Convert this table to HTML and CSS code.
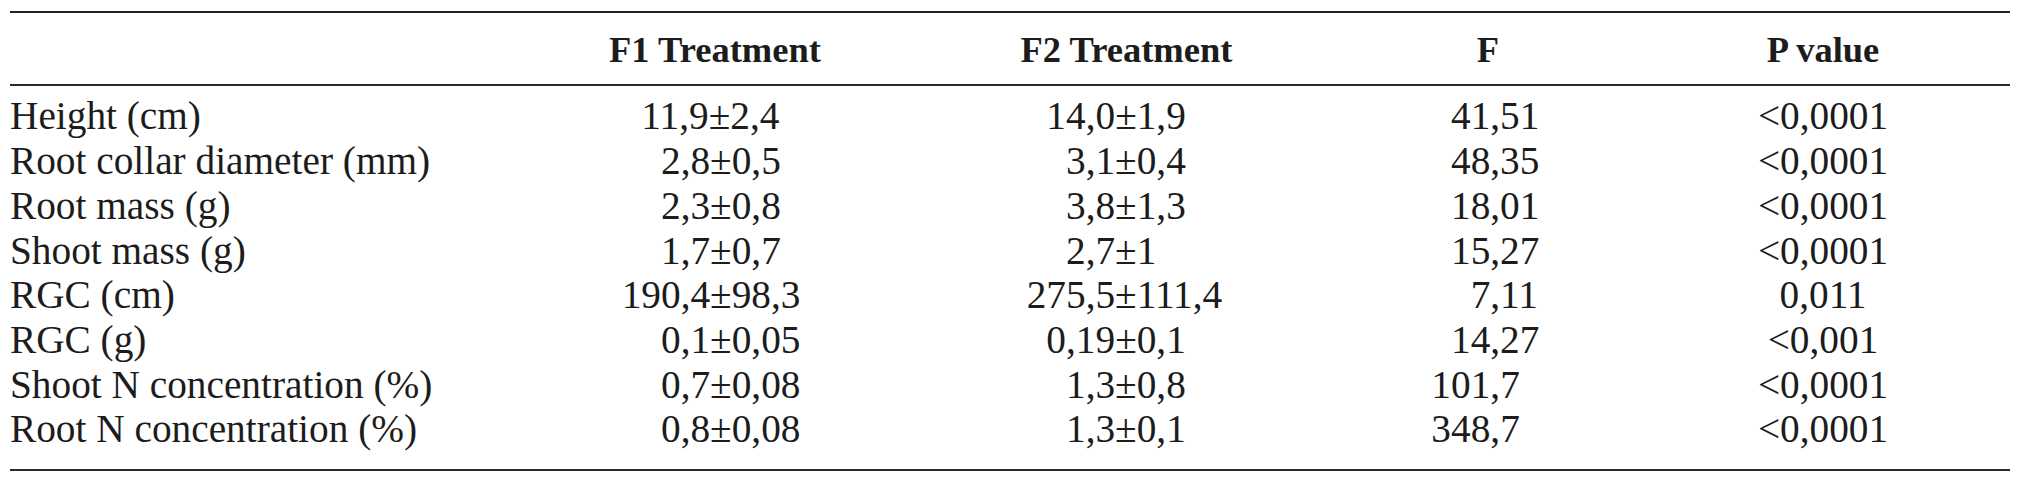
FILE: index.html
```html
<!DOCTYPE html>
<html lang="en">
<head>
<meta charset="utf-8">
<title>Table</title>
<link rel="stylesheet" href="styles.css">
</head>
<body>
<table class="data">
  <colgroup>
    <col class="c-label">
    <col class="c-f1">
    <col class="c-f2">
    <col class="c-f">
    <col class="c-p">
  </colgroup>
  <thead>
    <tr>
      <th class="label"></th>
      <th>F1 Treatment</th>
      <th>F2 Treatment</th>
      <th>F</th>
      <th class="pv">P value</th>
    </tr>
  </thead>
  <tbody>
    <tr>
      <td class="label">Height (cm)</td>
      <td class="f1 s1">11,9±2,4</td>
      <td class="f2 s1">14,0±1,9</td>
      <td class="f">41,51</td>
      <td class="pv">&lt;0,0001</td>
    </tr>
    <tr>
      <td class="label">Root collar diameter (mm)</td>
      <td class="f1">2,8±0,5</td>
      <td class="f2">3,1±0,4</td>
      <td class="f">48,35</td>
      <td class="pv">&lt;0,0001</td>
    </tr>
    <tr>
      <td class="label">Root mass (g)</td>
      <td class="f1">2,3±0,8</td>
      <td class="f2">3,8±1,3</td>
      <td class="f">18,01</td>
      <td class="pv">&lt;0,0001</td>
    </tr>
    <tr>
      <td class="label">Shoot mass (g)</td>
      <td class="f1">1,7±0,7</td>
      <td class="f2">2,7±1</td>
      <td class="f">15,27</td>
      <td class="pv">&lt;0,0001</td>
    </tr>
    <tr>
      <td class="label">RGC (cm)</td>
      <td class="f1 s2">190,4±98,3</td>
      <td class="f2 s2">275,5±111,4</td>
      <td class="f p1">7,11</td>
      <td class="pv">0,011</td>
    </tr>
    <tr>
      <td class="label">RGC (g)</td>
      <td class="f1">0,1±0,05</td>
      <td class="f2 s1">0,19±0,1</td>
      <td class="f">14,27</td>
      <td class="pv">&lt;0,001</td>
    </tr>
    <tr>
      <td class="label">Shoot N concentration (%)</td>
      <td class="f1">0,7±0,08</td>
      <td class="f2">1,3±0,8</td>
      <td class="f s1">101,7</td>
      <td class="pv">&lt;0,0001</td>
    </tr>
    <tr>
      <td class="label">Root N concentration (%)</td>
      <td class="f1">0,8±0,08</td>
      <td class="f2">1,3±0,1</td>
      <td class="f s1">348,7</td>
      <td class="pv">&lt;0,0001</td>
    </tr>
  </tbody>
</table>
</body>
</html>
```
FILE: styles.css
```css
html, body {
  margin: 0;
  padding: 0;
  background: #ffffff;
}

body {
  font-family: "Liberation Serif", "Times New Roman", serif;
  color: #1c1c1c;
}

.data {
  margin: 11px 0 0 10px;
  width: 2000px;
  table-layout: fixed;
  border-collapse: separate;
  border-spacing: 0;
}

.c-label { width: 500px; }
.c-f1 { width: 410px; }
.c-f2 { width: 413px; }
.c-f { width: 310px; }
.c-p { width: 367px; }

.data th {
  font-weight: bold;
  font-size: 36.5px;
  line-height: 42px;
  text-align: center;
  padding: 16px 0 13px 0;
  border-top: 2px solid #222;
  border-bottom: 2px solid #2a2a2a;
  white-space: nowrap;
}

.data td {
  font-size: 39.3px;
  line-height: 44.7px;
  padding: 0;
  text-align: left;
  white-space: nowrap;
}

.data tbody tr:first-child td {
  padding-top: 8.4px;
}

.data tbody tr:last-child td {
  padding-bottom: 17px;
  border-bottom: 2px solid #2a2a2a;
}

.data td.f1 { padding-left: 151px; }
.data td.f2 { padding-left: 146px; }
.data td.f { padding-left: 118px; }
.data .pv {
  text-align: center;
  padding-right: 7px;
}

.data td.s1 { text-indent: -0.5em; }
.data td.s2 { text-indent: -1em; }
.data td.p1 { text-indent: 0.5em; }
```
